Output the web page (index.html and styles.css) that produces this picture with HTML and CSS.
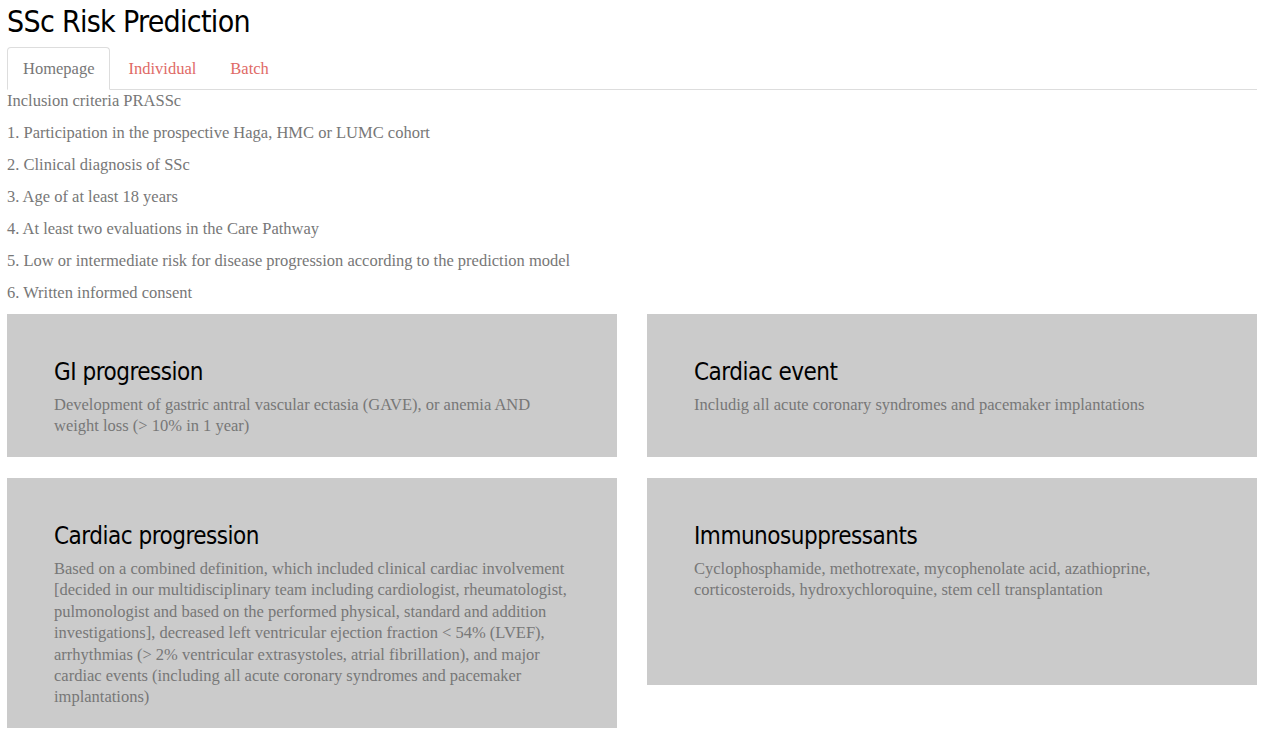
FILE: index.html
```html
<!DOCTYPE html>
<html lang="en">
<head>
<meta charset="utf-8">
<title>SSc Risk Prediction</title>
<link rel="stylesheet" href="styles.css">
</head>
<body>
<div class="page">
  <h2 class="title">SSc Risk Prediction</h2>
  <ul class="tabs">
    <li class="tab active"><a>Homepage</a></li>
    <li class="tab"><a>Individual</a></li>
    <li class="tab"><a>Batch</a></li>
  </ul>
  <div class="criteria">
    <p>Inclusion criteria PRASSc</p>
    <p>1. Participation in the prospective Haga, HMC or LUMC cohort</p>
    <p>2. Clinical diagnosis of SSc</p>
    <p>3. Age of at least 18 years</p>
    <p>4. At least two evaluations in the Care Pathway</p>
    <p>5. Low or intermediate risk for disease progression according to the prediction model</p>
    <p>6. Written informed consent</p>
  </div>
  <div class="cards">
    <div class="card">
      <h3>GI progression</h3>
      <p>Development of gastric antral vascular ectasia (GAVE), or anemia AND weight loss (&gt; 10% in 1 year)</p>
    </div>
    <div class="card">
      <h3>Cardiac event</h3>
      <p>Includig all acute coronary syndromes and pacemaker implantations</p>
    </div>
    <div class="card">
      <h3>Cardiac progression</h3>
      <p>Based on a combined definition, which included clinical cardiac involvement [decided in our multidisciplinary team including cardiologist, rheumatologist, pulmonologist and based on the performed physical, standard and addition investigations], decreased left ventricular ejection fraction &lt; 54% (LVEF), arrhythmias (&gt; 2% ventricular extrasystoles, atrial fibrillation), and major cardiac events (including all acute coronary syndromes and pacemaker implantations)</p>
    </div>
    <div class="card card-tall">
      <h3>Immunosuppressants</h3>
      <p>Cyclophosphamide, methotrexate, mycophenolate acid, azathioprine, corticosteroids, hydroxychloroquine, stem cell transplantation</p>
    </div>
  </div>
</div>
</body>
</html>
```

FILE: styles.css
```css
html, body {
  margin: 0;
  padding: 0;
  background: #fff;
}

body {
  font-family: "Liberation Serif", "Times New Roman", serif;
  font-size: 16.5px;
  color: #777;
}

.page {
  width: 1250px;
  padding: 0 0 0 7px;
}

.title {
  font-family: "DejaVu Sans Condensed", "DejaVu Sans", sans-serif;
  font-stretch: condensed;
  font-weight: 400;
  font-size: 30px;
  line-height: 33px;
  letter-spacing: -0.7px;
  color: #000;
  margin: 5px 0 9px;
}

.tabs {
  list-style: none;
  margin: 0;
  padding: 0;
  display: flex;
  border-bottom: 1px solid #ddd;
}

.tab {
  margin: 0 2px -1px 0;
}

.tab a {
  display: block;
  padding: 0 15px;
  height: 41px;
  line-height: 41px;
  border: 1px solid transparent;
  border-radius: 4px 4px 0 0;
  color: #e06a66;
}

.tab.active a {
  color: #777;
  background: #fff;
  border-color: #ddd #ddd transparent;
}

.criteria p {
  margin: 0 0 10px;
  line-height: 22px;
}

.cards {
  display: grid;
  grid-template-columns: 610px 610px;
  column-gap: 30px;
  row-gap: 21px;
  align-items: start;
  margin-top: 1px;
}

.card {
  background: #cbcbcb;
  padding: 45px 47px 20px;
  min-height: 143px;
  box-sizing: border-box;
}

.card-tall {
  min-height: 207px;
}

.card h3 {
  font-family: "DejaVu Sans Condensed", "DejaVu Sans", sans-serif;
  font-stretch: condensed;
  font-weight: 400;
  font-size: 24px;
  line-height: 26px;
  letter-spacing: -0.5px;
  color: #000;
  margin: 0 0 9px;
}

.card p {
  margin: 0;
  line-height: 21.4px;
}
```
